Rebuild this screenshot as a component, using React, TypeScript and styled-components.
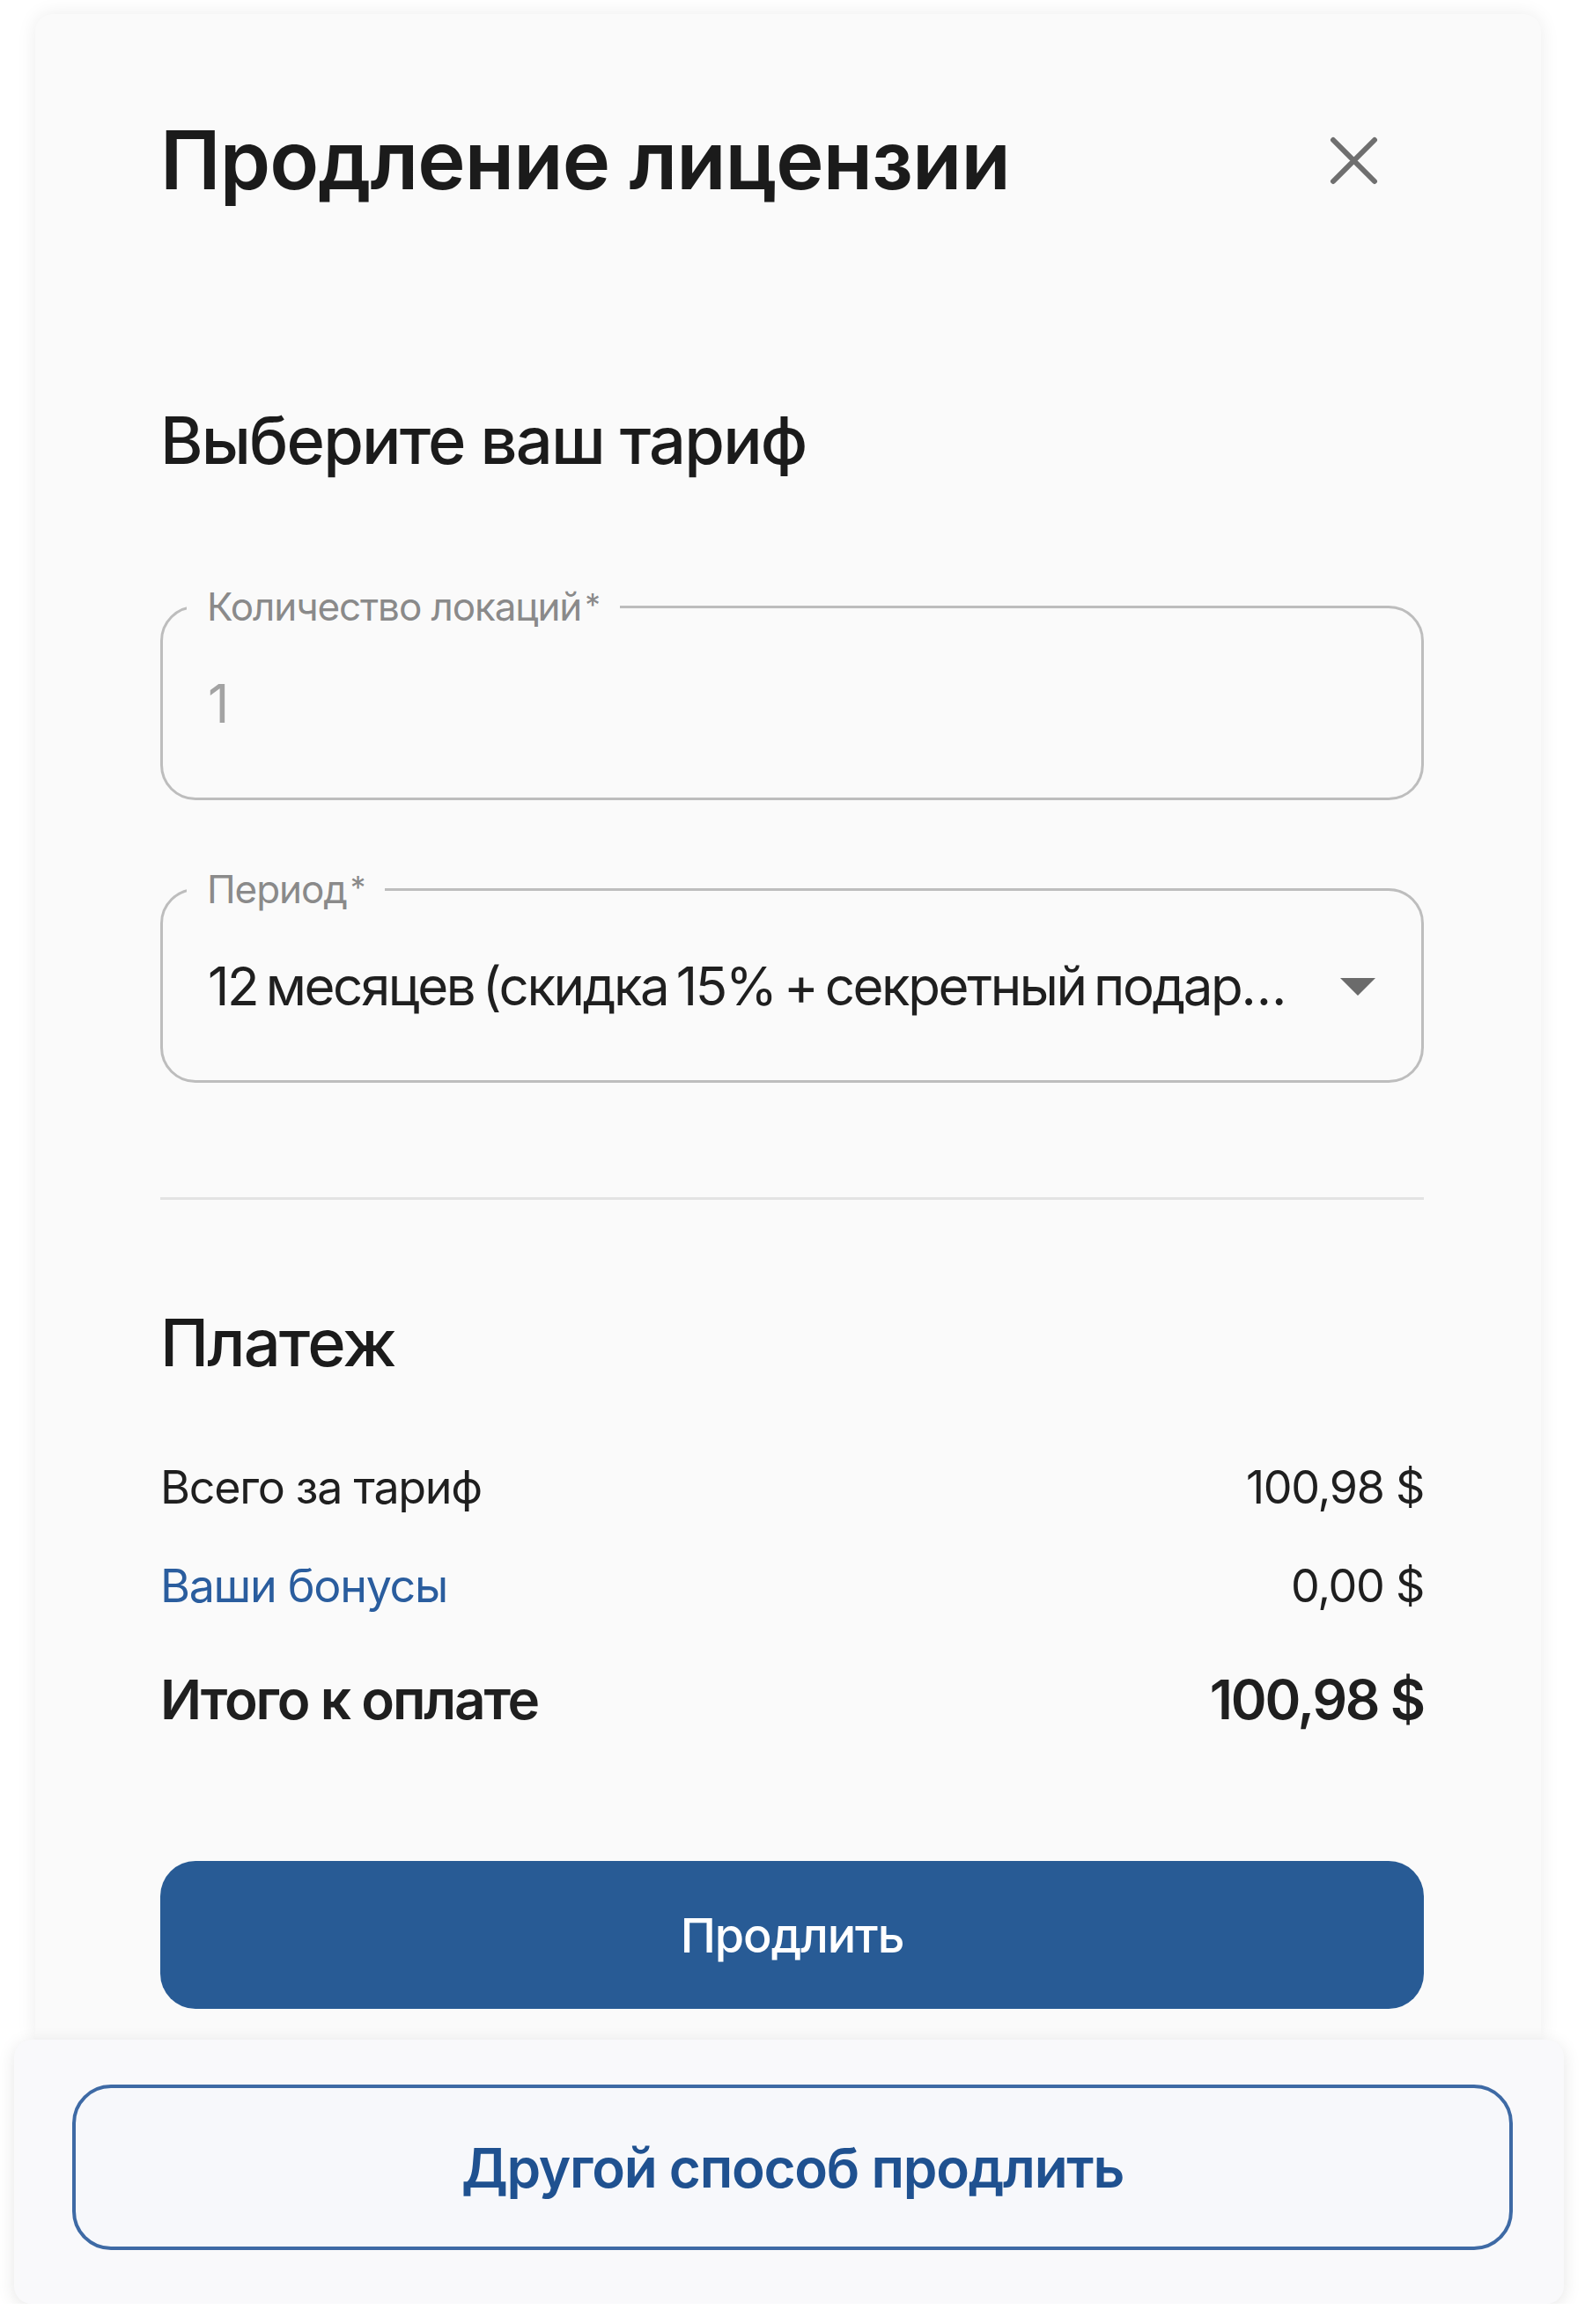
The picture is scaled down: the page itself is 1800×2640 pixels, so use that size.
import styled, { createGlobalStyle } from 'styled-components';

const GlobalStyle = createGlobalStyle`
  body {
    margin: 0;
    background: #ffffff;
    font-family: Inter, 'Noto Sans', 'Liberation Sans', sans-serif;
    color: #1b1b1b;
  }
  * {
    box-sizing: border-box;
  }
`;

const Page = styled.div`
  display: flex;
  flex-direction: column;
  padding: 16px 24px 0 16px;
`;

const Card = styled.div`
  margin: 0 26px 0 24px;
  padding: 120px 133px 35px 142px;
  background: #fafafa;
  border-radius: 20px 20px 0 0;
  box-shadow: 0 0 22px rgba(0, 0, 0, 0.08);
  display: flex;
  flex-direction: column;
`;

const Header = styled.div`
  display: flex;
  align-items: center;
  justify-content: space-between;
  height: 92px;
`;

const Title = styled.h1`
  margin: 0;
  font-size: 92px;
  line-height: 1;
  font-weight: 600;
  letter-spacing: -0.01em;
  color: #1b1b1b;
`;

const CloseButton = styled.button`
  display: flex;
  padding: 0;
  margin-right: 52px;
  border: 0;
  background: none;
  cursor: pointer;
`;

const SectionTitle = styled.h2<{ $top: number }>`
  margin: ${({ $top }) => $top}px 0 0;
  font-size: 74px;
  line-height: 1;
  font-weight: 500;
  letter-spacing: -0.025em;
  color: #1b1b1b;
`;

const Field = styled.fieldset<{ $top: number }>`
  margin: ${({ $top }) => $top}px 0 0;
  padding: 0 24px 0 27px;
  min-width: 0;
  border: 3px solid #bdbdbd;
  border-radius: 40px;
`;

const Legend = styled.legend`
  padding: 0 23px;
  font-size: 44px;
  line-height: 1;
  letter-spacing: -0.025em;
  color: #8a8a8a;

  sup {
    margin-left: 4px;
    font-size: 0.8em;
    vertical-align: 0.15em;
  }
`;

const Control = styled.div`
  display: flex;
  align-items: center;
  height: 195px;
  padding: 0 0 18px 24px;
`;

const Value = styled.span<{ $muted?: boolean }>`
  flex: 1;
  min-width: 0;
  font-size: 60px;
  line-height: 1.25;
  letter-spacing: -0.04em;
  word-spacing: -5px;
  color: ${({ $muted }) => ($muted ? '#a3a3a3' : '#1f1f1f')};
  white-space: nowrap;
  overflow: hidden;
  text-overflow: ellipsis;
`;

const Caret = styled.svg`
  flex: none;
  margin: 0 28px 0 56px;
`;

const Divider = styled.hr`
  margin: 130px 0 0;
  height: 3px;
  border: 0;
  background: #e3e3e3;
`;

const SummaryRow = styled.div<{ $top: number; $total?: boolean }>`
  display: flex;
  justify-content: space-between;
  align-items: center;
  margin-top: ${({ $top }) => $top}px;
  font-size: ${({ $total }) => ($total ? 62 : 52)}px;
  font-weight: ${({ $total }) => ($total ? 600 : 400)};
  letter-spacing: ${({ $total }) => ($total ? '-0.035em' : '-0.025em')};
  line-height: 1;
  color: #1f1f1f;
`;

const BonusLink = styled.a`
  color: #2a5d9e;
  text-decoration: none;
`;

const PrimaryButton = styled.button`
  margin-top: 152px;
  height: 168px;
  border: 0;
  border-radius: 40px;
  background: #285b95;
  color: #ffffff;
  font-family: inherit;
  font-size: 54px;
  font-weight: 500;
  letter-spacing: -0.02em;
  cursor: pointer;
`;

const Sheet = styled.div`
  position: relative;
  z-index: 1;
  padding: 51px 58px 61px 66px;
  background: #f9f9fb;
  border-radius: 20px;
  box-shadow: 0 4px 20px rgba(0, 0, 0, 0.1);
`;

const OutlineButton = styled.button`
  width: 100%;
  height: 188px;
  border: 4px solid #3e6aa5;
  border-radius: 44px;
  background: #f7f8fb;
  color: #1f5190;
  font-family: inherit;
  font-size: 62px;
  font-weight: 600;
  letter-spacing: -0.02em;
  cursor: pointer;
`;

function CloseIcon() {
  return (
    <svg width="55" height="55" viewBox="0 0 55 55">
      <path d="M4 4L51 51M51 4L4 51" stroke="#6f6f6f" strokeWidth="6" strokeLinecap="round" />
    </svg>
  );
}

function App() {
  return (
    <>
      <GlobalStyle />
      <Page>
        <Card>
          <Header>
            <Title>Продление лицензии</Title>
            <CloseButton aria-label="Закрыть">
              <CloseIcon />
            </CloseButton>
          </Header>

          <SectionTitle $top={235}>Выберите ваш тариф</SectionTitle>

          <Field $top={130}>
            <Legend>
              Количество локаций<sup>*</sup>
            </Legend>
            <Control>
              <Value $muted>1</Value>
            </Control>
          </Field>

          <Field $top={79}>
            <Legend>
              Период<sup>*</sup>
            </Legend>
            <Control>
              <Value>12 месяцев (скидка 15% + секретный подарок)</Value>
              <Caret width="40" height="20" viewBox="0 0 40 20">
                <path d="M0 0H40L20 20Z" fill="#6b6b6b" />
              </Caret>
            </Control>
          </Field>

          <Divider />

          <SectionTitle $top={125}>Платеж</SectionTitle>

          <SummaryRow $top={102}>
            <span>Всего за тариф</span>
            <span>100,98 $</span>
          </SummaryRow>
          <SummaryRow $top={60}>
            <BonusLink href="#">Ваши бонусы</BonusLink>
            <span>0,00 $</span>
          </SummaryRow>
          <SummaryRow $top={72} $total>
            <span>Итого к оплате</span>
            <span>100,98 $</span>
          </SummaryRow>

          <PrimaryButton>Продлить</PrimaryButton>
        </Card>

        <Sheet>
          <OutlineButton>Другой способ продлить</OutlineButton>
        </Sheet>
      </Page>
    </>
  );
}

export default App;
